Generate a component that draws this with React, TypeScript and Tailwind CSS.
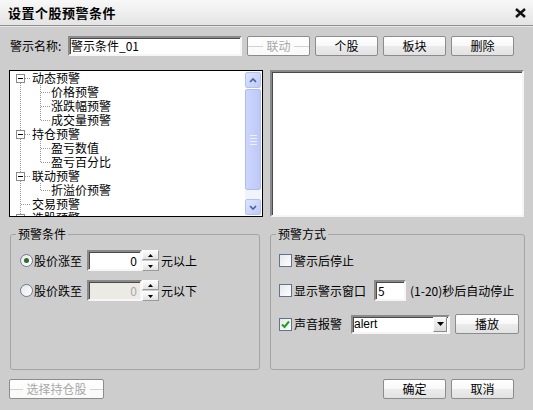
import React from 'react';

type Row = { t: string; kind: 'root' | 'child' | 'leaf'; first?: boolean; last?: boolean };

const rows: Row[] = [
  { t: '动态预警', kind: 'root', first: true },
  { t: '价格预警', kind: 'child' },
  { t: '涨跌幅预警', kind: 'child' },
  { t: '成交量预警', kind: 'child', last: true },
  { t: '持仓预警', kind: 'root' },
  { t: '盈亏数值', kind: 'child' },
  { t: '盈亏百分比', kind: 'child', last: true },
  { t: '联动预警', kind: 'root' },
  { t: '折溢价预警', kind: 'child', last: true },
  { t: '交易预警', kind: 'leaf' },
  { t: '选股预警', kind: 'root' },
];

const dot = { stroke: '#9a9a9a', strokeDasharray: '1 1', shapeRendering: 'crispEdges' as const };

function TreeLines({ row }: { row: Row }) {
  if (row.kind === 'child') {
    return (
      <svg width="41" height="14" className="shrink-0">
        <line x1="10.5" y1="0" x2="10.5" y2="14" {...dot} />
        <line x1="30.5" y1="0" x2="30.5" y2={row.last ? 8 : 14} {...dot} />
        <line x1="31" y1="7.5" x2="40" y2="7.5" {...dot} />
      </svg>
    );
  }
  if (row.kind === 'leaf') {
    return (
      <svg width="22" height="14" className="shrink-0">
        <line x1="10.5" y1="0" x2="10.5" y2="14" {...dot} />
        <line x1="11" y1="7.5" x2="21" y2="7.5" {...dot} />
      </svg>
    );
  }
  return (
    <svg width="22" height="14" className="shrink-0">
      {!row.first && <line x1="10.5" y1="0" x2="10.5" y2="3" {...dot} />}
      <line x1="10.5" y1="12" x2="10.5" y2="14" {...dot} />
      <line x1="15" y1="7.5" x2="21" y2="7.5" {...dot} />
      <rect x="6.5" y="3.5" width="8" height="8" fill="#fff" stroke="#8a8a8a" shapeRendering="crispEdges" />
      <line x1="8" y1="7.5" x2="13" y2="7.5" stroke="#000" shapeRendering="crispEdges" />
    </svg>
  );
}

function Btn({ children, disabled, className = '' }: { children: React.ReactNode; disabled?: boolean; className?: string }) {
  return (
    <div
      className={`h-[20px] shrink-0 flex items-center justify-center rounded-[2px] border border-[#8c8c8c] ${
        disabled
          ? 'text-[#a8a8a8] bg-[linear-gradient(to_bottom,#fdfdfd_9px,#d2d2d2_9px,#d2d2d2_10px,#fafafa_10px)]'
          : 'text-black bg-[linear-gradient(to_bottom,#ffffff,#f8f8f8_50%,#ececec_50%,#e2e2e2)]'
      } ${className}`}
    >
      <span className={disabled ? 'bg-[#fcfcfc] px-[3px]' : ''}>{children}</span>
    </div>
  );
}

function Spin() {
  const half = 'h-[10px] flex items-center justify-center border border-t-white border-l-white border-b-[#9a9a9a] border-r-[#9a9a9a] bg-[linear-gradient(to_bottom,#fbfbfb,#e2e2e2)]';
  return (
    <div className="w-[17px] h-[21px] flex flex-col justify-between shrink-0">
      <div className={half}>
        <svg width="5" height="3"><path d="M2.5 0 L5 3 L0 3 Z" fill="#000" /></svg>
      </div>
      <div className={half}>
        <svg width="5" height="3"><path d="M0 0 L5 0 L2.5 3 Z" fill="#000" /></svg>
      </div>
    </div>
  );
}

function Radio({ on }: { on?: boolean }) {
  return (
    <div className="w-[13px] h-[13px] rounded-full border border-[#6c7c92] bg-[linear-gradient(135deg,#e6e6e6,#ffffff)] flex items-center justify-center shrink-0">
      {on && <div className="w-[5px] h-[5px] rounded-full bg-[#2f6b2a]" />}
    </div>
  );
}

function Check({ on }: { on?: boolean }) {
  return (
    <div className="w-[13px] h-[13px] border border-[#5f7390] bg-[linear-gradient(135deg,#e8e8e8,#ffffff)] flex items-center justify-center shrink-0">
      {on && (
        <svg width="9" height="9" viewBox="0 0 9 9">
          <path d="M1 4.5 L3.5 7 L8 1.5" fill="none" stroke="#20a020" strokeWidth="2" />
        </svg>
      )}
    </div>
  );
}

const sunken = 'border-2 border-t-[#8a8a8a] border-l-[#8a8a8a] border-b-[#f6f6f6] border-r-[#f6f6f6] shadow-[inset_1px_1px_0_#4a4a4a]';

export default function App() {
  return (
    <div className="w-[533px] h-[410px] bg-[#cdcdcd] text-black text-[12px] leading-[14px] font-[family-name:'Noto_Sans_CJK_SC','Liberation_Sans',sans-serif] overflow-hidden">
      {/* title */}
      <div className="h-[26px] flex items-center justify-between pl-[8px] pr-[7px] border-b border-[#909090] bg-[linear-gradient(to_bottom,#f8f8f8,#e4e4e4)] shadow-[0_1px_0_#e8e8e8]">
        <span className="font-bold text-[13px] tracking-[0.5px]">设置个股预警条件</span>
        <svg width="11" height="10" viewBox="0 0 11 10">
          <path d="M1 1 L10 9 M10 1 L1 9" stroke="#111" strokeWidth="2.4" />
        </svg>
      </div>

      {/* name row */}
      <div className="mt-[10px] h-[20px] flex items-center pl-[10px]">
        <span className="w-[58px] shrink-0">警示名称:</span>
        <div className={`w-[174px] h-[20px] bg-white flex items-center pl-[1px] ${sunken}`}>警示条件_01</div>
        <div className="ml-[5px] flex gap-[5px]">
          <Btn disabled className="w-[63px]">联动</Btn>
          <Btn className="w-[63px]">个股</Btn>
          <Btn className="w-[63px]">板块</Btn>
          <Btn className="w-[63px]">删除</Btn>
        </div>
      </div>

      {/* panels */}
      <div className="mt-[14px] flex pl-[9px]">
        <div className="w-[254px] h-[147px] border border-black bg-white flex overflow-hidden">
          <div className="flex-1 overflow-hidden">
            {rows.map((r) => (
              <div key={r.t} className="h-[14px] flex items-center whitespace-nowrap">
                <TreeLines row={r} />
                <span>{r.t}</span>
              </div>
            ))}
          </div>
          <div className="w-[17px] pr-px flex flex-col bg-white">
            <div className="h-[16px] mt-px rounded-[2px] border border-[#b4c2f2] bg-[linear-gradient(135deg,#dde5ff,#bccaf8)] flex items-center justify-center">
              <svg width="8" height="5" viewBox="0 0 8 5"><path d="M1 4 L4 1 L7 4" fill="none" stroke="#4a5f96" strokeWidth="1.6" /></svg>
            </div>
            <div className="h-[101px] mt-px rounded-[2px] border border-[#aebcf0] bg-[linear-gradient(to_right,#cdd6fb,#bdc8f7)] flex flex-col items-center justify-center gap-[2px]">
              <div className="w-[7px] h-px bg-[#eef1ff]" />
              <div className="w-[7px] h-px bg-[#eef1ff]" />
              <div className="w-[7px] h-px bg-[#eef1ff]" />
              <div className="w-[7px] h-px bg-[#eef1ff]" />
            </div>
            <div className="flex-1 bg-[#f3f4fb]" />
            <div className="h-[16px] mb-px rounded-[2px] border border-[#b4c2f2] bg-[linear-gradient(135deg,#dde5ff,#bccaf8)] flex items-center justify-center">
              <svg width="8" height="5" viewBox="0 0 8 5"><path d="M1 1 L4 4 L7 1" fill="none" stroke="#4a5f96" strokeWidth="1.6" /></svg>
            </div>
          </div>
        </div>
        <div className={`ml-[7px] w-[254px] h-[147px] bg-white ${sunken}`} />
      </div>

      {/* groups */}
      <div className="mt-[10px] flex pl-[10px]">
        <fieldset className="w-[250px] h-[143px] min-w-0 border border-[#a4a4a4] rounded-[3px]">
          <legend className="ml-[5px] px-[2px]">预警条件</legend>
          <div className="mt-[9px] pl-[9px] flex flex-col gap-[9px]">
            <div className="h-[21px] flex items-center">
              <Radio on />
              <span className="ml-px">股价涨至</span>
              <div className={`ml-[5px] w-[55px] h-[21px] bg-white flex items-center justify-end pr-[3px] ${sunken}`}>0</div>
              <Spin />
              <span className="ml-[2px]">元以上</span>
            </div>
            <div className="h-[21px] flex items-center">
              <Radio />
              <span className="ml-px">股价跌至</span>
              <div className={`ml-[5px] w-[55px] h-[21px] bg-[#ebeae4] text-[#a8a8a8] flex items-center justify-end pr-[3px] ${sunken}`}>0</div>
              <Spin />
              <span className="ml-[2px]">元以下</span>
            </div>
          </div>
        </fieldset>
        <fieldset className="ml-[10px] w-[255px] h-[143px] min-w-0 border border-[#a4a4a4] rounded-[3px]">
          <legend className="ml-[5px] px-[2px]">预警方式</legend>
          <div className="mt-[9px] pl-[8px] flex flex-col">
            <div className="h-[21px] flex items-center">
              <Check />
              <span className="ml-[2px]">警示后停止</span>
            </div>
            <div className="mt-[9px] h-[21px] flex items-center">
              <Check />
              <span className="ml-[2px]">显示警示窗口</span>
              <div className={`ml-[8px] w-[32px] h-[21px] bg-white flex items-center pl-[2px] ${sunken}`}>5</div>
              <span className="ml-[4px]">(1-20)秒后自动停止</span>
            </div>
            <div className="mt-[13px] h-[20px] flex items-center">
              <Check on />
              <span className="ml-[2px]">声音报警</span>
              <div className={`ml-[9px] w-[99px] h-[19px] bg-white flex items-center ${sunken}`}>
                <span className="flex-1 pl-px font-[family-name:'Liberation_Sans',sans-serif]">alert</span>
                <div className="w-[14px] h-[15px] mr-px border border-t-white border-l-white border-b-[#8a8a8a] border-r-[#8a8a8a] bg-[linear-gradient(to_bottom,#f6f6f6,#dcdcdc)] flex items-center justify-center">
                  <svg width="7" height="4" viewBox="0 0 7 4"><path d="M0 0 L7 0 L3.5 4 Z" fill="#000" /></svg>
                </div>
              </div>
              <Btn className="ml-[5px] w-[64px]">播放</Btn>
            </div>
          </div>
        </fieldset>
      </div>

      {/* bottom */}
      <div className="mt-[9px] flex items-center pl-[9px]">
        <Btn disabled className="w-[95px]">选择持仓股</Btn>
        <div className="ml-auto mr-[19px] flex gap-[5px]">
          <Btn className="w-[63px]">确定</Btn>
          <Btn className="w-[63px]">取消</Btn>
        </div>
      </div>
    </div>
  );
}
